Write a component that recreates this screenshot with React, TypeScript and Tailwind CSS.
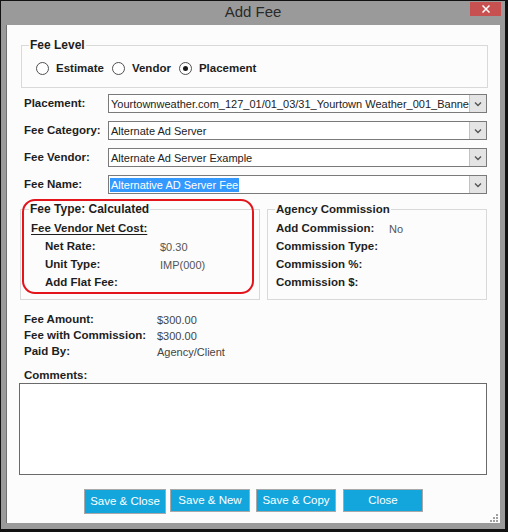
import type { ReactNode } from "react";

function Radio({ label, checked }: { label: string; checked?: boolean }) {
  return (
    <label className="flex items-center gap-[7px]">
      <span className="flex h-[13px] w-[13px] items-center justify-center rounded-full border border-[#505050] bg-white">
        {checked && <span className="h-[5px] w-[5px] rounded-full bg-[#1a1a1a]" />}
      </span>
      <span>{label}</span>
    </label>
  );
}

function Chevron() {
  return (
    <svg width="8" height="6" viewBox="0 0 8 6" fill="none">
      <path d="M1 1.5 L4 4.5 L7 1.5" stroke="#555" strokeWidth="1.4" />
    </svg>
  );
}

function Select({ value, selected }: { value: string; selected?: boolean }) {
  return (
    <div className="flex h-[19px] w-[379px] border border-[#7a7a7a] bg-white">
      <div className="flex flex-1 items-center overflow-hidden whitespace-nowrap pl-[1px] text-[11px] font-normal leading-[14px] text-[#222]">
        {selected ? <span className="bg-[#3399ff] px-[1px] text-white">{value}</span> : <span className="pl-[1px]">{value}</span>}
      </div>
      <div className="flex w-[17px] items-center justify-center border-l border-[#c2c2c2] bg-[#e4e4e4]">
        <Chevron />
      </div>
    </div>
  );
}

function FieldRow({ label, children }: { label: string; children: ReactNode }) {
  return (
    <div className="flex h-[19px] items-center pl-[17px]">
      <span className="w-[84px]">{label}</span>
      {children}
    </div>
  );
}

function InfoRow({ label, value, width }: { label: string; value?: string; width: string }) {
  return (
    <div className="flex h-[18px] items-center">
      <span className={width}>{label}</span>
      {value && <span className="text-[11px] font-normal text-[#555]">{value}</span>}
    </div>
  );
}

function Button({ children, big }: { children: ReactNode; big?: boolean }) {
  return (
    <button
      className={
        big
          ? "h-[25px] w-[82px] border border-[#a8a8a8] bg-[#12a6dd] text-[11.5px] font-normal text-white"
          : "h-[23px] w-[80px] border border-[#a8a8a8] bg-[#12a6dd] text-[11.5px] font-normal text-white"
      }
    >
      {children}
    </button>
  );
}

export default function App() {
  return (
    <div className="h-[532px] w-[508px] bg-[#121212] pb-[3px] pl-[1px] pr-[3px] pt-[1px] font-['Liberation_Sans',Arial,sans-serif] text-[11.5px] font-bold text-[#1e1e1e]">
      <div className="flex h-full flex-col bg-[#9a9a9a]">
        {/* title bar */}
        <div className="grid h-[24px] grid-cols-[1fr_auto_1fr]">
          <div />
          <div className="text-[15px] font-normal leading-[22px] text-[#2a2a2a]">Add Fee</div>
          <div className="flex justify-end pr-[4px] pt-[1px]">
            <div className="flex h-[14px] w-[31px] items-center justify-center bg-[#c75050]">
              <svg width="8" height="8" viewBox="0 0 8 8">
                <path d="M0.5 0.5 L7.5 7.5 M7.5 0.5 L0.5 7.5" stroke="#fff" strokeWidth="1.5" />
              </svg>
            </div>
          </div>
        </div>

        {/* client area */}
        <div className="relative mb-[6px] ml-[5px] mr-[5px] flex flex-1 flex-col border-l border-[#707070] bg-[#fcfcfc]">
          <fieldset className="ml-[14px] mt-[14px] w-[467px] border border-[#d9d9d9]">
            <legend className="ml-[7px] px-[1px] text-[12px] leading-[13px]">Fee Level</legend>
            <div className="flex gap-[8px] pb-[12px] pl-[14px] pt-[9px] leading-[14px]">
              <Radio label="Estimate" />
              <Radio label="Vendor" />
              <Radio label="Placement" checked />
            </div>
          </fieldset>

          <div className="mt-[6px] flex flex-col gap-[8px]">
            <FieldRow label="Placement:">
              <Select value="Yourtownweather.com_127_01/01_03/31_Yourtown Weather_001_Banner" />
            </FieldRow>
            <FieldRow label="Fee Category:">
              <Select value="Alternate Ad Server" />
            </FieldRow>
            <FieldRow label="Fee Vendor:">
              <Select value="Alternate Ad Server Example" />
            </FieldRow>
            <FieldRow label="Fee Name:">
              <Select value="Alternative AD Server Fee" selected />
            </FieldRow>
          </div>

          <div className="relative ml-[13px] mt-[9px] flex gap-[7px]">
            <fieldset className="w-[240px] border border-[#d9d9d9]">
              <legend className="ml-[8px] px-[1px] text-[12px] leading-[13px]">Fee Type: Calculated</legend>
              <div className="pb-[7px] pl-[10px] pt-[4px]">
                <div className="flex h-[18px] items-center">
                  <span className="underline underline-offset-[2px]">Fee Vendor Net Cost:</span>
                </div>
                <div className="pl-[14px]">
                  <InfoRow label="Net Rate:" value="$0.30" width="w-[115px]" />
                  <InfoRow label="Unit Type:" value="IMP(000)" width="w-[115px]" />
                  <InfoRow label="Add Flat Fee:" width="w-[115px]" />
                </div>
              </div>
            </fieldset>
            <fieldset className="w-[220px] border border-[#d9d9d9]">
              <legend className="ml-[7px] px-[1px] leading-[13px]">Agency Commission</legend>
              <div className="pb-[7px] pl-[8px] pt-[4px]">
                <InfoRow label="Add Commission:" value="No" width="w-[113px]" />
                <InfoRow label="Commission Type:" width="w-[113px]" />
                <InfoRow label="Commission %:" width="w-[113px]" />
                <InfoRow label="Commission $:" width="w-[113px]" />
              </div>
            </fieldset>
            {/* red annotation */}
            <div className="pointer-events-none absolute left-[2px] top-[-4px] h-[95px] w-[232px] rounded-[13px] border-2 border-[#e3141b]" />
          </div>

          <div className="mt-[12px] pl-[17px]">
            {[
              ["Fee Amount:", "$300.00"],
              ["Fee with Commission:", "$300.00"],
              ["Paid By:", "Agency/Client"],
            ].map(([l, v]) => (
              <div key={l} className="flex h-[16px] items-center">
                <span className="w-[133px]">{l}</span>
                <span className="text-[11px] font-normal text-[#444]">{v}</span>
              </div>
            ))}
          </div>

          <div className="mt-[8px] h-[14px] pl-[17px] leading-[14px]">Comments:</div>
          <textarea className="ml-[12px] mt-[1px] block h-[92px] w-[468px] resize-none border border-[#6a6a6a] bg-white outline-none" />

          <div className="mt-[14px] flex items-start pl-[77px]">
            <Button big>Save &amp; Close</Button>
            <div className="ml-[4px]">
              <Button>Save &amp; New</Button>
            </div>
            <div className="ml-[6px]">
              <Button>Save &amp; Copy</Button>
            </div>
            <div className="ml-[7px]">
              <Button>Close</Button>
            </div>
          </div>

          {/* resize grip */}
          <svg className="absolute bottom-[1px] right-[2px]" width="9" height="9" viewBox="0 0 9 9">
            <rect x="7" y="1" width="2" height="2" fill="#a0a0a0" />
            <rect x="4" y="4" width="2" height="2" fill="#a0a0a0" />
            <rect x="7" y="4" width="2" height="2" fill="#a0a0a0" />
            <rect x="1" y="7" width="2" height="2" fill="#a0a0a0" />
            <rect x="4" y="7" width="2" height="2" fill="#a0a0a0" />
            <rect x="7" y="7" width="2" height="2" fill="#a0a0a0" />
          </svg>
        </div>
      </div>
    </div>
  );
}
